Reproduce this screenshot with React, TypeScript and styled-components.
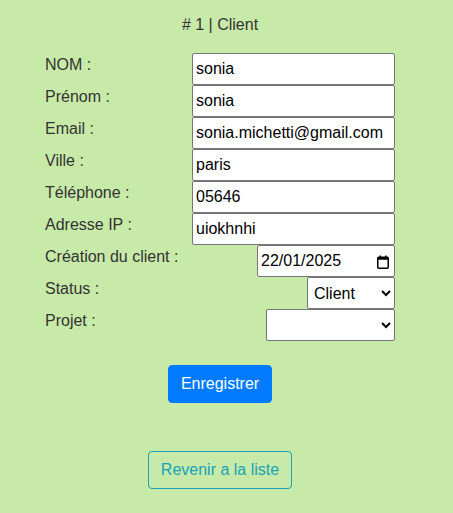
import React from "react";
import styled, { createGlobalStyle } from "styled-components";

const Global = createGlobalStyle`
  html, body { margin: 0; padding: 0; background: #c8eaa9; }
  body { font-family: "Liberation Sans", Arial, sans-serif; color: #333; }
`;

const Page = styled.div`
  width: 350px;
  margin-left: 45px;
  padding-top: 16px;
  display: flex;
  flex-direction: column;
  align-items: stretch;
`;

const Title = styled.h1`
  margin: 0 0 19px;
  font-size: 16px;
  line-height: 18px;
  font-weight: 400;
  text-align: center;
  color: #333;
`;

const Form = styled.form`
  display: flex;
  flex-direction: column;
`;

const Row = styled.div`
  display: flex;
  justify-content: space-between;
  align-items: flex-start;
  height: 32px;
`;

const Label = styled.label`
  font-size: 16px;
  line-height: 18px;
  padding-top: 3px;
  color: #333;
`;

const field = `
  box-sizing: border-box;
  height: 32px;
  border: 1px solid #767676;
  border-radius: 2px;
  background: #fff;
  font-family: "Liberation Sans", Arial, sans-serif;
  font-size: 16px;
  color: #000;
  margin: 0;
`;

const Input = styled.input<{ $w: number }>`
  ${field}
  width: ${(p) => p.$w}px;
  padding: 0 3px;
`;

const DateBox = styled.div`
  position: relative;
  width: 138px;
  height: 32px;
`;

const DateInput = styled.input`
  ${field}
  width: 138px;
  padding: 0 24px 0 3px;
`;

const CalendarIcon = styled.svg`
  position: absolute;
  right: 6px;
  top: 10px;
  width: 12px;
  height: 14px;
  pointer-events: none;
`;

const Select = styled.select<{ $w: number }>`
  ${field}
  width: ${(p) => p.$w}px;
  padding: 0 2px;
`;

const Actions = styled.div<{ $top: number }>`
  display: flex;
  justify-content: center;
  margin-top: ${(p) => p.$top}px;
`;

const Button = styled.button<{ $variant: "primary" | "outline" }>`
  box-sizing: border-box;
  height: 38px;
  padding: 6px 12px;
  border-radius: 4px;
  font-family: "Liberation Sans", Arial, sans-serif;
  font-size: 16px;
  line-height: 24px;
  cursor: pointer;
  border: 1px solid ${(p) => (p.$variant === "primary" ? "#007bff" : "#17a2b8")};
  background: ${(p) => (p.$variant === "primary" ? "#007bff" : "transparent")};
  color: ${(p) => (p.$variant === "primary" ? "#fff" : "#17a2b8")};
`;

export default function App() {
  return (
    <>
      <Global />
      <Page>
        <Title># 1 | Client</Title>
        <Form onSubmit={(e) => e.preventDefault()}>
          <Row>
            <Label>NOM :</Label>
            <Input $w={203} defaultValue="sonia" />
          </Row>
          <Row>
            <Label>Prénom :</Label>
            <Input $w={203} defaultValue="sonia" />
          </Row>
          <Row>
            <Label>Email :</Label>
            <Input $w={203} defaultValue="sonia.michetti@gmail.com" />
          </Row>
          <Row>
            <Label>Ville :</Label>
            <Input $w={203} defaultValue="paris" />
          </Row>
          <Row>
            <Label>Téléphone :</Label>
            <Input $w={203} defaultValue="05646" />
          </Row>
          <Row>
            <Label>Adresse IP :</Label>
            <Input $w={203} defaultValue="uiokhnhi" />
          </Row>
          <Row>
            <Label>Création du client :</Label>
            <DateBox>
              <DateInput type="text" defaultValue="22/01/2025" />
              <CalendarIcon viewBox="0 0 12 14">
                <rect x="0.75" y="2.25" width="10.5" height="11" rx="1" fill="none" stroke="#000" strokeWidth="1.5" />
                <rect x="0.75" y="2.25" width="10.5" height="2.5" fill="#000" />
                <rect x="2.5" y="0.5" width="1.5" height="2.5" fill="#000" />
                <rect x="8" y="0.5" width="1.5" height="2.5" fill="#000" />
              </CalendarIcon>
            </DateBox>
          </Row>
          <Row>
            <Label>Status :</Label>
            <Select $w={88} defaultValue="client">
              <option value="client">Client</option>
              <option value="prospect">Prospect</option>
            </Select>
          </Row>
          <Row>
            <Label>Projet :</Label>
            <Select $w={129} defaultValue="">
              <option value=""></option>
            </Select>
          </Row>
          <Actions $top={24}>
            <Button $variant="primary" type="submit">Enregistrer</Button>
          </Actions>
        </Form>
        <Actions $top={48}>
          <Button $variant="outline" type="button">Revenir a la liste</Button>
        </Actions>
      </Page>
    </>
  );
}
